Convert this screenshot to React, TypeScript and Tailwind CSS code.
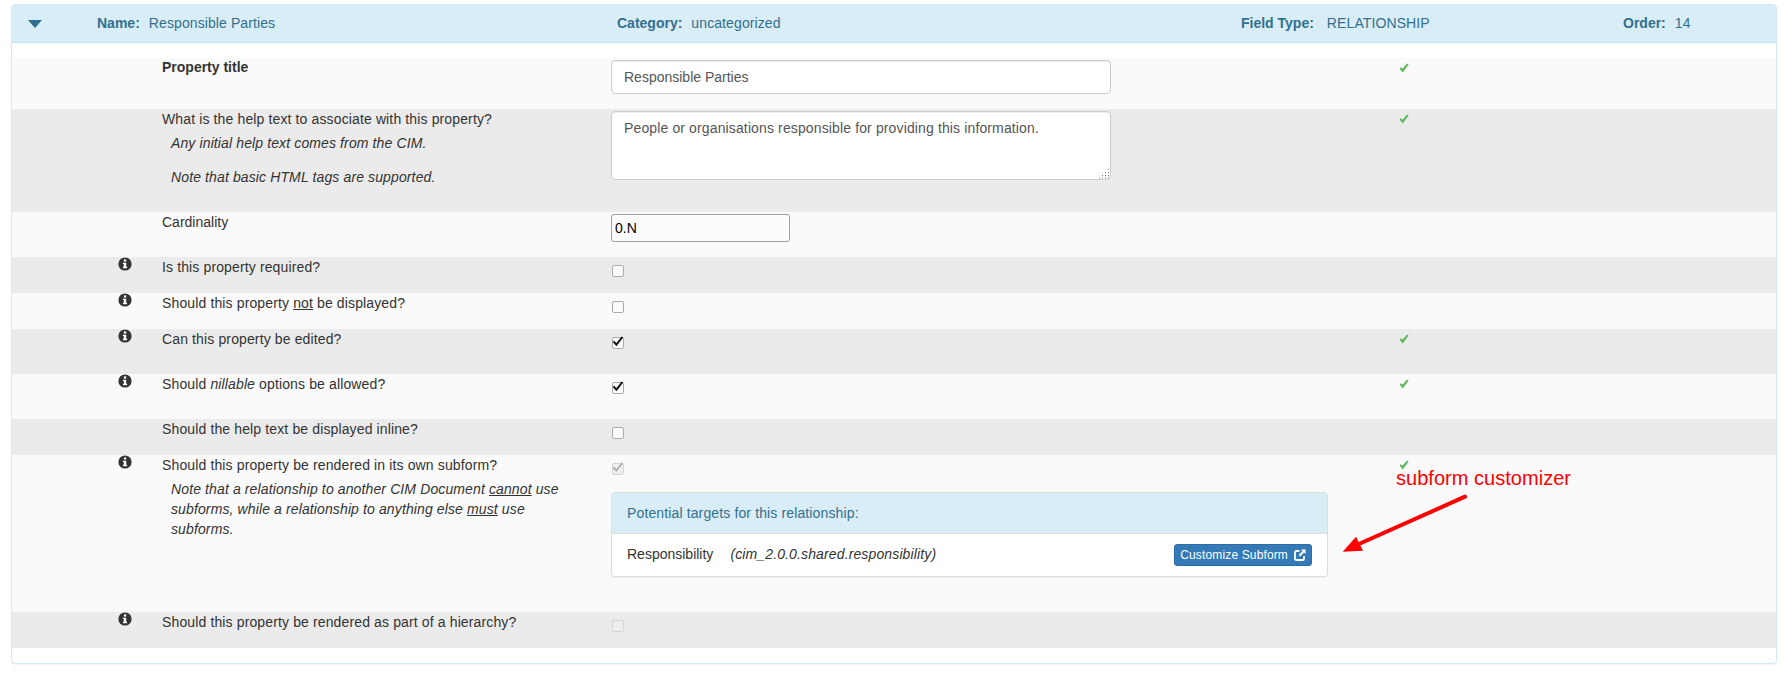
import type { ReactNode } from "react";

const InfoIcon = () => (
  <svg width="14" height="14" viewBox="0 0 14 14" className="ml-[106px] shrink-0">
    <circle cx="7" cy="7" r="6.6" fill="#333333" />
    <rect x="5.9" y="2.4" width="2.3" height="2.2" fill="#ffffff" />
    <path d="M4.9 5.7h3.3v4.1h0.9v1.4H4.9V9.8h0.9V7.1H4.9z" fill="#ffffff" />
  </svg>
);

const Ok = () => (
  <svg width="10" height="10" viewBox="0 0 10 10" className="mt-[5px]">
    <path d="M0.6 5.6 L2 4.2 L3.5 5.8 L8 0.6 L9.6 1.6 L3.7 9.4 Z" fill="#5cb85c" />
  </svg>
);

const Checkbox = ({ checked, disabled }: { checked?: boolean; disabled?: boolean }) => (
  <div className="relative mt-[8px] ml-[1px] w-[12px] h-[12px]">
    <input
      type="checkbox"
      readOnly
      disabled={disabled}
      className={
        disabled
          ? "appearance-none block w-[12px] h-[12px] rounded-[2px] border border-[#d4d4d4] bg-[#eeeeee]"
          : "appearance-none block w-[12px] h-[12px] rounded-[2px] border border-[#aaaaaa] bg-[#fbfbfb]"
      }
    />
    {checked && (
      <svg width="15" height="13" viewBox="0 0 15 13" className="absolute left-[-1px] top-[-2px]">
        <path
          d="M2.4 6.4 L5.4 9.6 L11.4 2"
          fill="none"
          stroke={disabled ? "#a8a8a8" : "#111111"}
          strokeWidth={disabled ? 1.6 : 2}
        />
      </svg>
    )}
  </div>
);

const Row = ({
  height,
  dark,
  info,
  ok,
  label,
  children,
}: {
  height: string;
  dark?: boolean;
  info?: boolean;
  ok?: boolean;
  label: ReactNode;
  children?: ReactNode;
}) => (
  <div className={`flex ${height} ${dark ? "bg-[#ebebeb]" : "bg-[#fafafa]"}`}>
    <div className="w-[150px] shrink-0">{info && <InfoIcon />}</div>
    <div className="w-[449px] shrink-0 pr-[36px]">{label}</div>
    <div className="w-[788px] shrink-0">{children}</div>
    <div>{ok && <Ok />}</div>
  </div>
);

const HeaderField = ({
  name,
  value,
  width,
  gap,
}: {
  name: string;
  value: string;
  width: string;
  gap: string;
}) => (
  <div className={`${width} shrink-0`}>
    <span className={`font-bold ${gap}`}>{name}</span>
    <span className="tracking-[0.1px]">{value}</span>
  </div>
);

export default function App() {
  return (
    <div
      className="relative min-h-screen bg-white pt-[4px] text-[14px] leading-[20px] tracking-[0.13px] text-[#333333]"
      style={{ fontFamily: '"Liberation Sans", Arial, sans-serif' }}
    >
      <div className="ml-[11px] w-[1766px] h-[660px] rounded-[4px] border border-[#d3e8f4] bg-white shadow-[0_1px_1px_rgba(0,0,0,0.05)]">
        <div className="flex items-center h-[38px] pb-[2px] bg-[#d9edf7] border-b border-[#bce8f1] text-[#31708f] tracking-normal rounded-t-[3px]">
          <div className="w-[85px] shrink-0 pl-[16px]">
            <svg width="14" height="8" viewBox="0 0 14 8" className="block mt-[2px]">
              <path d="M0 0 H14 L7 8 Z" fill="#31708f" />
            </svg>
          </div>
          <HeaderField name="Name:" value="Responsible Parties" width="w-[520px]" gap="mr-[9px]" />
          <HeaderField name="Category:" value="uncategorized" width="w-[624px]" gap="mr-[9px]" />
          <HeaderField name="Field Type:" value="RELATIONSHIP" width="w-[382px]" gap="mr-[13px]" />
          <HeaderField name="Order:" value="14" width="w-[100px]" gap="mr-[9px]" />
        </div>

        <div className="pt-[15px]">
          <Row height="h-[51px]" ok label={<div className="-mt-[1px] font-bold tracking-normal">Property title</div>}>
            <input
              readOnly
              defaultValue="Responsible Parties"
              className="mt-[2px] block w-[500px] h-[34px] px-[12px] rounded-[4px] border border-[#cccccc] bg-white text-[#555555] tracking-normal shadow-[inset_0_1px_1px_rgba(0,0,0,0.075)]"
            />
          </Row>

          <Row
            height="h-[103px]"
            dark
            ok
            label={
              <>
                <div>What is the help text to associate with this property?</div>
                <div className="mt-[4px] pl-[9px] italic tracking-[0.12px]">
                  <p>Any initial help text comes from the CIM.</p>
                  <p className="mt-[14px]">Note that basic HTML tags are supported.</p>
                </div>
              </>
            }
          >
            <div className="relative mt-[2px] w-[500px]">
              <textarea
                readOnly
                defaultValue="People or organisations responsible for providing this information."
                className="block w-[500px] h-[69px] px-[12px] py-[6px] resize-none rounded-[4px] border border-[#cccccc] bg-white text-[#555555] shadow-[inset_0_1px_1px_rgba(0,0,0,0.075)]"
              />
              <svg width="11" height="11" viewBox="0 0 11 11" className="absolute right-[1px] bottom-[1px]">
                <path d="M9.5 1v1M9.5 4v1M6.5 4v1M9.5 7v1M6.5 7v1M3.5 7v1M9.5 9.5v1M6.5 9.5v1M3.5 9.5v1M0.5 9.5v1" stroke="#777777" strokeWidth="1" />
              </svg>
            </div>
          </Row>

          <Row height="h-[45px]" label={<span className="tracking-normal">Cardinality</span>}>
            <input
              readOnly
              defaultValue="0.N"
              className="mt-[2px] block w-[179px] h-[28px] px-[3px] rounded-[3px] border border-[#a0a0a0] bg-[#fcfcfc] text-black tracking-normal"
            />
          </Row>

          <Row height="h-[36px]" dark info label="Is this property required?">
            <Checkbox />
          </Row>

          <Row
            height="h-[36px]"
            info
            label={
              <>
                Should this property <u>not</u> be displayed?
              </>
            }
          >
            <Checkbox />
          </Row>

          <Row height="h-[45px]" dark info ok label="Can this property be edited?">
            <Checkbox checked />
          </Row>

          <Row
            height="h-[45px]"
            info
            ok
            label={
              <>
                Should <i>nillable</i> options be allowed?
              </>
            }
          >
            <Checkbox checked />
          </Row>

          <Row height="h-[36px]" dark label="Should the help text be displayed inline?">
            <Checkbox />
          </Row>

          <Row
            height="h-[157px]"
            info
            ok
            label={
              <>
                <div>Should this property be rendered in its own subform?</div>
                <p className="mt-[4px] pl-[9px] italic tracking-[0.12px]">
                  Note that a relationship to another CIM Document <u>cannot</u> use subforms, while a
                  relationship to anything else <u>must</u> use subforms.
                </p>
              </>
            }
          >
            <Checkbox checked disabled />
            <div className="mt-[17px] w-[717px] rounded-[4px] border border-[#dddddd] bg-white shadow-[0_1px_1px_rgba(0,0,0,0.05)]">
              <div className="h-[40px] px-[15px] py-[10px] rounded-t-[3px] bg-[#d9edf7] text-[#31708f]">
                Potential targets for this relationship:
              </div>
              <div className="flex items-start justify-between h-[43px] pt-[10px] px-[15px] border-t border-[#dddddd]">
                <div>
                  <span className="tracking-normal">Responsibility</span>
                  <i className="ml-[17px]">(cim_2.0.0.shared.responsibility)</i>
                </div>
                <button className="flex items-center gap-[6px] h-[22px] px-[5px] rounded-[3px] border border-[#2e6da4] bg-[#337ab7] text-[12px] tracking-[0.14px] text-white">
                  Customize Subform
                  <svg width="12" height="12" viewBox="0 0 12 12">
                    <path
                      d="M5.4 2 H2.6 Q1 2 1 3.6 V9.4 Q1 11 2.6 11 H8.4 Q10 11 10 9.4 V7"
                      fill="none"
                      stroke="#ffffff"
                      strokeWidth="1.8"
                    />
                    <path d="M7 0.5 H11.6 V5.1 L10 3.6 L6.2 7.4 L4.7 5.9 L8.5 2.1 Z" fill="#ffffff" />
                  </svg>
                </button>
              </div>
            </div>
          </Row>

          <Row height="h-[36px]" dark info label="Should this property be rendered as part of a hierarchy?">
            <Checkbox disabled />
          </Row>
        </div>
      </div>

      <div className="absolute left-[1396px] top-[466px] text-[20px] leading-[24px] tracking-[0.03px] text-[#ff0000]">
        subform customizer
      </div>
      <svg width="140" height="70" viewBox="0 0 140 70" className="absolute left-[1334px] top-[490px]">
        <path d="M131 6.7 L26 53.5" stroke="#ff0000" strokeWidth="4" strokeLinecap="round" fill="none" />
        <path d="M8.7 61.7 L22 46.7 L29 60.7 Z" fill="#ff0000" />
      </svg>
    </div>
  );
}
